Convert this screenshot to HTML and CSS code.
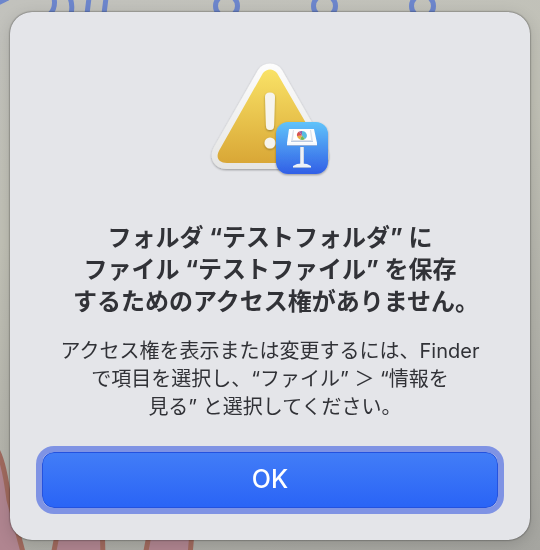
FILE: index.html
```
<!DOCTYPE html>
<html lang="ja">
<head>
  <meta charset="utf-8">
  <meta name="viewport" content="width=device-width, initial-scale=1">
  <title>Keynote</title>
  <link rel="stylesheet" href="styles.css">
</head>
<body>
  <!-- Slide behind the dialog -->
  <svg class="backdrop" viewBox="0 0 540 550" preserveAspectRatio="none" aria-hidden="true">
    <g fill="none" stroke="#6d86cc" stroke-width="5">
      <path d="M-2 3L8-2M54-2Q56 8 50 14M70-2Q73 5 71 14M89-2L87 14M106-2L104 14"/>
      <circle cx="226.500" cy="6" r="11"/>
      <circle cx="324.500" cy="6" r="11"/>
      <circle cx="422.500" cy="6" r="11"/>
    </g>
    <g fill="#b08590" stroke="#a06a5e" stroke-width="5">
      <path d="M-4 448Q4 460 9 500L24 556H-4Z"/>
      <path d="M60 520L53 556H103L102 520Z"/>
      <path d="M152 520L145 556H190L193 520Z"/>
    </g>
  </svg>

  <div class="dialog" role="alertdialog" aria-labelledby="title" aria-describedby="message">
    <svg class="icon" width="128" height="120" viewBox="206 58 128 120" aria-hidden="true">
      <defs>
        <linearGradient id="frame" x1="0" y1="0" x2="0" y2="1">
          <stop offset="0" stop-color="#fdfdfd"/>
          <stop offset="1" stop-color="#e5e5e4"/>
        </linearGradient>
        <linearGradient id="yellow" x1="0" y1="0" x2="0" y2="1">
          <stop offset="0" stop-color="#f9e266"/>
          <stop offset="1" stop-color="#d9a736"/>
        </linearGradient>
        <linearGradient id="blue" x1="0" y1="0" x2="0" y2="1">
          <stop offset="0" stop-color="#60c3fa"/>
          <stop offset="1" stop-color="#315fe6"/>
        </linearGradient>
        <linearGradient id="metal">
          <stop offset="0" stop-color="#b9c6dc"/>
          <stop offset=".5" stop-color="#fff"/>
          <stop offset="1" stop-color="#bdc9de"/>
        </linearGradient>
        <filter id="shadow" x="-20%" y="-20%" width="140%" height="140%">
          <feDropShadow dx="0" dy="1" stdDeviation="1" flood-opacity=".35"/>
        </filter>
      </defs>
      <path fill="url(#frame)" filter="url(#shadow)" d="M258 70Q262 63.500 270 63.500T282 70L326 147C333 158 326 169 313 169H227C214 169 208 158 214 147Z"/>
      <path fill="url(#yellow)" d="M263 73Q266 69.500 270 69.500T277 73L321 149C326 157 322 163 313 163H227C218 163 215 157 220 149Z"/>
      <g fill="#f6f4ed" filter="url(#shadow)">
        <path d="M265 97Q265 92.500 270 92.500T275 97L274 126Q274 130 270 130T266 126Z"/>
        <circle cx="270" cy="143" r="5.500"/>
      </g>
      <rect x="276" y="122" width="52" height="52" rx="12" fill="url(#blue)" filter="url(#shadow)"/>
      <rect x="300" y="147" width="4" height="18" fill="url(#metal)"/>
      <path fill="#edf2f8" d="M297 164Q302 163 307 164L311 166V167H293V166Z"/>
      <path fill="#9fb3db" d="M293 167H311V168H293Z"/>
      <path fill="#fdfdfd" d="M289 129H314L317 143H287Z"/>
      <path fill="#dde2ea" d="M293 130H311L313 141H291Z"/>
      <path fill="#fff" d="M294 130H310L311 140H293Z"/>
      <path fill="#bccbe2" d="M291 141H313V142H291Z"/>
      <path fill="#f6f9fd" d="M287 143H317V145H287Z"/>
      <path fill="#91add8" d="M287 145H317V146H287Z"/>
      <path fill="#58bde1" d="M302 135.500V131A5 4.500 0 0 1 305 139Z"/>
      <path fill="#71b85b" d="M302 135.500L305 139A5 4.500 0 0 1 300 139.500Z"/>
      <path fill="#ecaa45" d="M302 135.500L300 139.500A5 4.500 0 0 1 297 136Z"/>
      <path fill="#d7514f" d="M302 135.500L297 136A5 4.500 0 0 1 299 131.500Z"/>
      <path fill="#9a60a8" d="M302 135.500L299 131.500A5 4.500 0 0 1 302 131Z"/>
    </svg>

    <h1 class="title" id="title">フォルダ “テストフォルダ” に<br>ファイル “テストファイル” を保存<br>するためのアクセス権がありません<span class="stop">。</span></h1>
    <p class="message" id="message">アクセス権を表示または変更するには、Finder<br>で項目を選択し、“ファイル” ＞ “情報を<br>見る” と選択してください<span class="stop">。</span></p>
    <button class="ok" type="button">OK</button>
  </div>
</body>
</html>
```
FILE: styles.css
```
* {
  box-sizing: border-box;
}

body {
  margin: 0;
  min-height: 100vh;
  padding: 12px 10px 10px;
  background: linear-gradient(165deg, #c2c2bd, #c1c1b6 35%, #a5a5a0);
  font-family: Inter, "Noto Sans CJK JP", sans-serif;
  color: #313237;
}

.backdrop {
  position: fixed;
  inset: 0;
  width: 100%;
  height: 100%;
}

.dialog {
  position: relative;
  display: flex;
  flex-direction: column;
  align-items: center;
  padding: 46px 32px 32px;
  background: #e4e5e9;
  border-radius: 22px;
  box-shadow: 0 0 2px rgba(0, 0, 0, 0.7), 0 4px 16px rgba(0, 0, 0, 0.15);
  text-align: center;
}

.icon {
  display: block;
}

.title {
  margin: 44px 0 0;
  font-size: 24px;
  line-height: 32px;
  font-weight: 700;
}

.message {
  margin: 19px 0 0;
  font-size: 20px;
  line-height: 28px;
}

/* half-width full stop, keeps the last line centered */
.stop {
  font-feature-settings: "halt";
}

.ok {
  width: 100%;
  height: 56px;
  margin-top: 31px;
  padding: 0 0 2px;
  border: 1px solid #2452df;
  border-radius: 12px;
  background: linear-gradient(#427df7, #2a64f6);
  box-shadow: 0 0 0 6px #7f93e4;
  color: #fff;
  font-family: inherit;
  font-size: 25px;
  font-weight: 500;
}

.ok:active {
  background: #2459dd;
}
```
